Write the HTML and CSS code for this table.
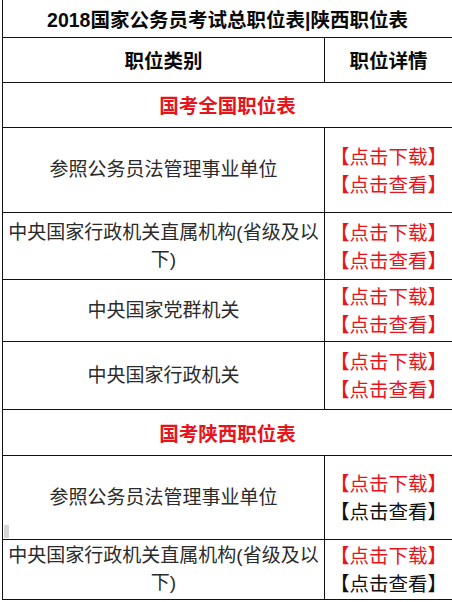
FILE: index.html
```html
<!DOCTYPE html>
<html lang="zh-CN">
<head>
<meta charset="utf-8">
<title>2018国家公务员考试总职位表|陕西职位表</title>
<link rel="stylesheet" href="styles.css">
</head>
<body>
<table class="jobs">
  <colgroup><col class="c-type"><col class="c-detail"></colgroup>
  <tr class="r-title"><td colspan="2" class="title">2018国家公务员考试总职位表|陕西职位表</td></tr>
  <tr class="r-head"><td class="head">职位类别</td><td class="head">职位详情</td></tr>
  <tr class="r-sec1"><td colspan="2" class="section">国考全国职位表</td></tr>
  <tr class="r-1"><td class="name">参照公务员法管理事业单位</td><td class="links"><span class="red">【点击下载】</span><br><span class="red">【点击查看】</span></td></tr>
  <tr class="r-2"><td class="name">中央国家行政机关直属机构(省级及以下)</td><td class="links"><span class="red">【点击下载】</span><br><span class="red">【点击查看】</span></td></tr>
  <tr class="r-3"><td class="name">中央国家党群机关</td><td class="links"><span class="red">【点击下载】</span><br><span class="red">【点击查看】</span></td></tr>
  <tr class="r-4"><td class="name">中央国家行政机关</td><td class="links"><span class="red">【点击下载】</span><br><span class="red">【点击查看】</span></td></tr>
  <tr class="r-sec2"><td colspan="2" class="section">国考陕西职位表</td></tr>
  <tr class="r-5"><td class="name marked">参照公务员法管理事业单位</td><td class="links"><span class="red">【点击下载】</span><br><span class="dark">【点击查看】</span></td></tr>
  <tr class="r-6"><td class="name">中央国家行政机关直属机构(省级及以下)</td><td class="links"><span class="red">【点击下载】</span><br><span class="dark">【点击查看】</span></td></tr>
</table>
</body>
</html>
```
FILE: styles.css
```css
html, body {
  margin: 0;
  padding: 0;
  background: #ffffff;
}
body {
  font-family: "Noto Sans CJK SC", "Liberation Sans", sans-serif;
  overflow: hidden;
}
.jobs {
  border-collapse: collapse;
  margin-left: 2px;
  width: 450px;
  table-layout: fixed;
}
.c-type { width: 322px; }
.c-detail { width: 128px; }
.jobs td {
  border: 1px solid #111111;
  padding: 0 3px;
  text-align: center;
  vertical-align: middle;
}
.jobs tr:first-child td { border-top: none; }
.title {
  font-family: "Liberation Sans", "Noto Sans CJK SC", sans-serif;
  font-weight: bold;
  font-size: 19.5px;
  color: #0a0a0a;
}
.head {
  font-weight: bold;
  font-size: 19.5px;
  color: #0a0a0a;
}
.section {
  font-weight: bold;
  font-size: 19.5px;
  color: #e8141b;
}
.name {
  font-family: "Liberation Sans", "Noto Sans CJK SC", sans-serif;
  font-size: 19px;
  color: #2b2b2b;
  line-height: 27px;
}
.links {
  font-size: 19.5px;
  line-height: 28px;
  white-space: nowrap;
}
.red { color: #e8141b; }
.dark { color: #111111; }
.marked { position: relative; }
.marked::after {
  content: "";
  position: absolute;
  left: 1px;
  bottom: 1px;
  width: 5px;
  height: 13px;
  background: #d6d6d6;
}
.r-title { height: 37px; }
.r-head { height: 45px; }
.r-sec1 { height: 45px; }
.r-1 { height: 85px; }
.r-2 { height: 67px; }
.r-3 { height: 62px; }
.r-4 { height: 68px; }
.r-sec2 { height: 46px; }
.r-5 { height: 84px; }
.r-6 { height: 60px; }
```
